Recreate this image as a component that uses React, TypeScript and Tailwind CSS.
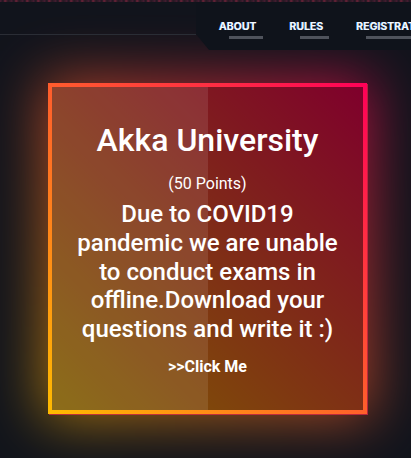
import React from "react"

const navItems = ["ABOUT", "RULES", "REGISTRATION"]

export default function App() {
  return (
    <div className="relative h-[458px] w-[411px] overflow-hidden bg-[#11141c] font-['Roboto',sans-serif] text-white">
      {/* noisy strip from the hero image above */}
      <div className="h-[2px] bg-[repeating-linear-gradient(90deg,#4a1d33_0px,#1b1620_3px,#6b2238_5px,#231822_8px,#3c1b2c_11px)]" />

      {/* header */}
      <header className="relative z-10 flex h-[48px]">
        <div className="h-[33px] w-[196px] border-b border-[#2a2d35]" />
        <nav className="flex h-[48px] flex-1 gap-[33px] overflow-hidden bg-[#0f131b] pl-[23px] pt-[20px] [clip-path:polygon(0_0,100%_0,100%_100%,13px_100%,0_32px)]">
          {navItems.map((item) => (
            <div key={item} className="relative h-[11px] whitespace-nowrap">
              <span className="block font-['Inter',sans-serif] text-[10.5px] leading-none font-bold text-[#f4f7ff] [text-shadow:-0.6px_0_rgba(110,190,255,0.8)]">
                {item}
              </span>
              <span className="absolute top-[14px] left-[10px] -right-[6px] h-[3px] bg-[#4f535c]" />
            </div>
          ))}
        </nav>
      </header>

      {/* card */}
      <div className="mt-[33px] pl-[48px]">
        <div className="relative w-[319px]">
          {/* glow */}
          <div className="absolute -inset-[6px] bg-[linear-gradient(45deg,#ffbc00,#ff0058)] opacity-60 blur-[28px]" />

          <div className="relative bg-[linear-gradient(45deg,#ffbc00,#ff0058)] p-[4px] shadow-[1px_1px_0_rgba(255,40,80,0.6)]">
            <div className="relative bg-[linear-gradient(45deg,#ffbc00,#ff0058)]">
              <div className="absolute inset-0 bg-black/50" />
              <div className="absolute inset-y-0 left-0 w-1/2 bg-white/10" />

              <div className="relative flex flex-col items-center px-[20px] py-[34px] text-center leading-[normal]">
                <h2 className="text-[32px] leading-[normal] font-medium">Akka University</h2>
                <p className="mt-[15px] text-[16px] leading-[normal]">(50 Points)</p>
                <p className="mt-[7px] text-[24px] leading-[1.2] font-medium">
                  Due to COVID19 pandemic we are unable to conduct exams in offline.Download your questions and write it :)
                </p>
                <a className="mt-[13px] text-[16px] leading-[normal] font-bold">&gt;&gt;Click Me</a>
              </div>
            </div>
          </div>
        </div>
      </div>
    </div>
  )
}
